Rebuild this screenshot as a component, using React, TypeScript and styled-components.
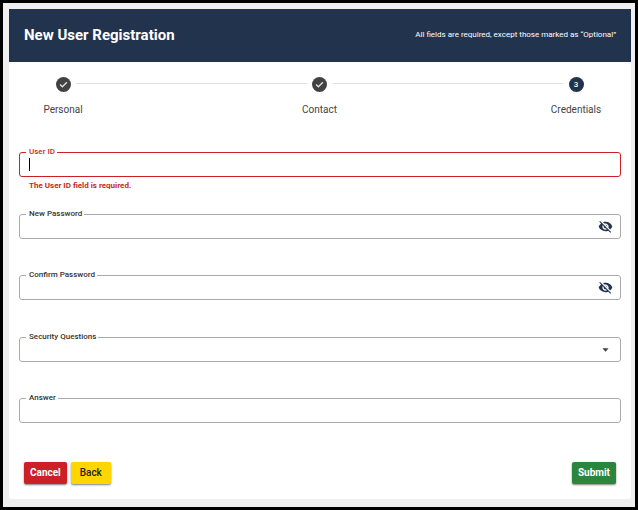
import React, { useState } from "react";
import styled, { createGlobalStyle } from "styled-components";

const navy = "#22334d";
const red = "#cc1f26";

const GlobalStyle = createGlobalStyle`
  *, *::before, *::after { box-sizing: border-box; }
  html, body, #root { height: 100%; }
  body {
    margin: 0;
    background: #000;
    font-family: Roboto, "Liberation Sans", sans-serif;
    color: #333;
  }
`;

const Frame = styled.div`
  min-height: 100%;
  padding: 6px 4px 8px 6px;
  border: 3px solid #000;
  background: #f0f0f0;
`;

const Card = styled.main`
  background: #fff;
  border-radius: 0 0 3px 3px;
`;

const Header = styled.header`
  display: flex;
  align-items: center;
  justify-content: space-between;
  min-height: 53px;
  padding: 0 15px 2px;
  background: ${navy};
  color: #fff;
`;

const Title = styled.h1`
  margin: 0;
  font-size: 15px;
  line-height: 22px;
  font-weight: 700;
`;

const Note = styled.p`
  margin: 0;
  font-size: 8px;
  line-height: 12px;
  font-weight: 400;
`;

const Stepper = styled.ol`
  display: flex;
  margin: 0;
  padding: 15px 1px 0 0;
  list-style: none;
`;

const Step = styled.li`
  display: flex;
  flex: none;
  flex-direction: column;
  align-items: center;
  gap: 12px;
  width: 108px;
  color: #444;
  font-size: 10px;
  line-height: 12px;
`;

const Connector = styled.li`
  flex: 1;
  height: 1px;
  margin: 6px -41px 0;
  background: #e0e0e0;
`;

const Bullet = styled.span<{ $current?: boolean }>`
  display: flex;
  align-items: center;
  justify-content: center;
  width: 15px;
  height: 15px;
  border-radius: 50%;
  background: ${(p) => (p.$current ? navy : "#424242")};
  color: #fff;
  font-size: 8px;
  line-height: 15px;
  font-weight: 500;
`;

const Form = styled.form`
  padding: 36px 10px 15px;
`;

const FieldGroup = styled.div`
  padding-bottom: 1px;
`;

const Field = styled.div`
  min-height: 61px;
`;

const Outline = styled.div<{ $invalid?: boolean }>`
  position: relative;
  display: flex;
  align-items: center;
  height: 25px;
  border: 1px solid ${(p) => (p.$invalid ? red : "#aaa")};
  border-radius: 3px;
`;

const Label = styled.label<{ $invalid?: boolean }>`
  position: absolute;
  top: -7px;
  left: 6px;
  padding: 0 2px 0 3px;
  background: #fff;
  color: ${(p) => (p.$invalid ? red : "#333")};
  font-size: 8px;
  line-height: 12px;
  font-weight: 500;
`;

const controlStyle = `
  flex: 1;
  min-width: 0;
  height: 100%;
  padding: 0 9px;
  border: 0;
  outline: 0;
  background: transparent;
  color: #222;
  font: 400 11px/14px Roboto, sans-serif;
`;

const Input = styled.input`${controlStyle}`;

const Select = styled.select`
  ${controlStyle}
  appearance: none;
`;

const Cursor = styled.span`
  position: absolute;
  top: 5px;
  left: 9px;
  width: 1px;
  height: 13px;
  background: #000;
`;

const ErrorText = styled.p`
  margin: 0;
  padding: 2px 10px 21px;
  color: ${red};
  font-size: 8px;
  line-height: 14px;
  font-weight: 700;
`;

const IconButton = styled.button`
  display: flex;
  margin-right: 7px;
  padding: 0;
  border: 0;
  background: none;
  color: ${navy};
  cursor: pointer;
`;

const Arrow = styled.svg`
  position: absolute;
  top: 10px;
  right: 11px;
  pointer-events: none;
`;

const Actions = styled.div`
  display: flex;
  gap: 4px;
  padding: 2px 5px 0;
`;

const tones = {
  danger: { bg: red, fg: "#fff", weight: 700 },
  warning: { bg: "#ffd600", fg: "#222", weight: 500 },
  success: { bg: "#2b853d", fg: "#fff", weight: 700 },
};

const Button = styled.button<{ $tone: keyof typeof tones; $end?: boolean }>`
  min-width: 40px;
  height: 22px;
  margin-left: ${(p) => (p.$end ? "auto" : "0")};
  padding: 0 6px;
  border: 0;
  border-radius: 2px;
  background: ${(p) => tones[p.$tone].bg};
  color: ${(p) => tones[p.$tone].fg};
  box-shadow: 0 1px 2px rgba(0, 0, 0, 0.5);
  font: ${(p) => tones[p.$tone].weight} 10px/22px Roboto, sans-serif;
  cursor: pointer;
`;

const Check = () => (
  <svg width="9" height="9" viewBox="0 0 24 24" aria-hidden="true">
    <path d="M3 12l6 6L21 6" fill="none" stroke="#ddd" strokeWidth="4" />
  </svg>
);

const EyeOff = () => (
  <svg width="15" height="15" viewBox="0 0 24 24" fill="currentColor" aria-hidden="true">
    <path d="M12 7c2.76 0 5 2.24 5 5 0 .65-.13 1.26-.36 1.83l2.92 2.92c1.51-1.26 2.7-2.89 3.43-4.75-1.73-4.39-6-7.5-11-7.5-1.4 0-2.74.25-3.98.7l2.16 2.16C10.74 7.13 11.35 7 12 7zM2 4.27l2.28 2.28.46.46C3.08 8.3 1.78 10.02 1 12c1.73 4.39 6 7.5 11 7.5 1.55 0 3.03-.3 4.38-.84l.42.42L19.73 22 21 20.73 3.27 3 2 4.27zM7.53 9.8l1.55 1.55c-.05.21-.08.43-.08.65 0 1.66 1.34 3 3 3 .22 0 .44-.03.65-.08l1.55 1.55c-.67.33-1.41.53-2.2.53-2.76 0-5-2.24-5-5 0-.79.2-1.53.53-2.2zm4.31-.78l3.15 3.15.02-.16c0-1.66-1.34-3-3-3l-.17.01z" />
  </svg>
);

function PasswordField({ id, label }: { id: string; label: string }) {
  const [visible, setVisible] = useState(false);
  return (
    <Field>
      <Outline>
        <Label htmlFor={id}>{label}</Label>
        <Input id={id} type={visible ? "text" : "password"} />
        <IconButton
          type="button"
          aria-label={`Toggle ${label} visibility`}
          onClick={() => setVisible(!visible)}
        >
          <EyeOff />
        </IconButton>
      </Outline>
    </Field>
  );
}

export default function App() {
  const [userId, setUserId] = useState("");
  return (
    <>
      <GlobalStyle />
      <Frame>
        <Card>
          <Header>
            <Title>New User Registration</Title>
            <Note>All fields are required, except those marked as “Optional”</Note>
          </Header>
          <Stepper>
            <Step>
              <Bullet><Check /></Bullet>
              Personal
            </Step>
            <Connector aria-hidden="true" />
            <Step>
              <Bullet><Check /></Bullet>
              Contact
            </Step>
            <Connector aria-hidden="true" />
            <Step aria-current="step">
              <Bullet $current>3</Bullet>
              Credentials
            </Step>
          </Stepper>
          <Form onSubmit={(e) => e.preventDefault()}>
            <FieldGroup>
              <Field>
                <Outline $invalid>
                  <Label htmlFor="user-id" $invalid>User ID</Label>
                  <Input
                    id="user-id"
                    value={userId}
                    onChange={(e) => setUserId(e.target.value)}
                    aria-invalid="true"
                    aria-describedby="user-id-error"
                  />
                  {userId === "" && <Cursor />}
                </Outline>
                <ErrorText id="user-id-error">The User ID field is required.</ErrorText>
              </Field>
              <PasswordField id="new-password" label="New Password" />
              <PasswordField id="confirm-password" label="Confirm Password" />
            </FieldGroup>
            <FieldGroup>
              <Field>
                <Outline>
                  <Label htmlFor="question">Security Questions</Label>
                  <Select id="question" defaultValue="">
                    <option value="" />
                  </Select>
                  <Arrow width="7" height="4" viewBox="0 0 8 4" aria-hidden="true">
                    <path d="M0.5 0h7L4 4z" fill="#444" />
                  </Arrow>
                </Outline>
              </Field>
              <Field>
                <Outline>
                  <Label htmlFor="answer">Answer</Label>
                  <Input id="answer" />
                </Outline>
              </Field>
            </FieldGroup>
            <Actions>
              <Button type="button" $tone="danger">Cancel</Button>
              <Button type="button" $tone="warning">Back</Button>
              <Button type="submit" $tone="success" $end>Submit</Button>
            </Actions>
          </Form>
        </Card>
      </Frame>
    </>
  );
}
